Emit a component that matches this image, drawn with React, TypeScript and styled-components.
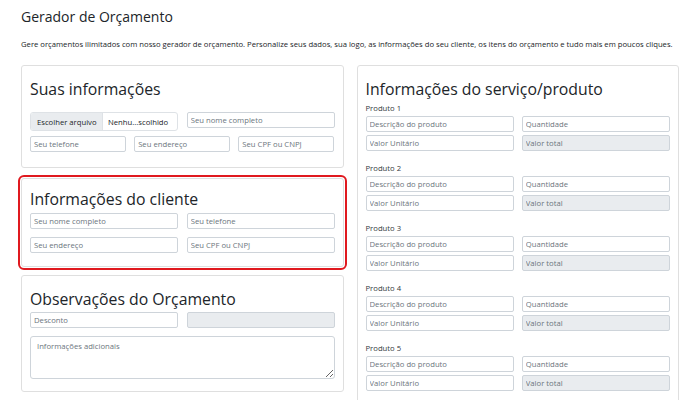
import styled, { createGlobalStyle } from "styled-components";

const GlobalStyle = createGlobalStyle`
  * {
    box-sizing: border-box;
  }
  body {
    margin: 0;
    background: #fff;
    color: #212529;
    font-family: "Open Sans", "Noto Sans", sans-serif;
  }
`;

const Page = styled.div`
  padding: 5px 21px 0;
`;

const Title = styled.h1`
  margin: 0;
  font-size: 14px;
  line-height: 24px;
  font-weight: 500;
`;

const Lead = styled.p`
  margin: 9px 0 15px;
  font-size: 7.68px;
  line-height: 12px;
  white-space: nowrap;
`;

const Columns = styled.div`
  display: grid;
  grid-template-columns: 1fr 1fr;
  gap: 13px;
  align-items: start;
`;

const LeftCol = styled.div`
  display: flex;
  flex-direction: column;
  gap: 8px;
`;

const Card = styled.section<{ $top: number; $bottom: number; $highlight?: boolean }>`
  border: 1px solid #dfdfdf;
  border-radius: 3px;
  padding: ${p => p.$top}px 8px ${p => p.$bottom}px;
  ${p => p.$highlight && `
    margin-top: 2px;
    outline: 2px solid #e0191f;
    outline-offset: 1px;
  `}
`;

const Heading = styled.h2<{ $gap: number }>`
  margin: 0 0 ${p => p.$gap}px;
  font-size: 15.8px;
  line-height: 20px;
  font-weight: 500;
`;

const Row = styled.div<{ $cols: number; $colGap?: number; $rowGap?: number }>`
  display: grid;
  grid-template-columns: repeat(${p => p.$cols}, 1fr);
  column-gap: ${p => p.$colGap ?? 9}px;
  align-items: start;
  margin-bottom: ${p => p.$rowGap ?? 8}px;
  &:last-child {
    margin-bottom: 0;
  }
`;

const Input = styled.input`
  display: block;
  width: 100%;
  height: 16px;
  margin: 0;
  padding: 0 3px;
  border: 1px solid #ced4da;
  border-radius: 2px;
  background: #fff;
  color: #212529;
  font-family: inherit;
  font-size: 7.7px;
  &::placeholder {
    color: #6c757d;
  }
  &:disabled {
    background: #e9ecef;
  }
`;

const TextArea = styled.textarea`
  display: block;
  width: 100%;
  height: 43px;
  margin: 0;
  padding: 4px 6px;
  border: 1px solid #ced4da;
  border-radius: 3px;
  font-family: inherit;
  font-size: 7.7px;
  &::placeholder {
    color: #6c757d;
  }
`;

const FilePicker = styled.label`
  display: flex;
  height: 19px;
  border: 1px solid #dee2e6;
  border-radius: 3px;
  overflow: hidden;
  font-size: 7.7px;
  cursor: pointer;
  input {
    display: none;
  }
`;

const FileButton = styled.span`
  display: flex;
  align-items: center;
  padding: 0 6px;
  width: 72px;
  background: #e9ecef;
  border-right: 1px solid #dee2e6;
  white-space: nowrap;
`;

const FileName = styled.span`
  display: flex;
  align-items: center;
  padding: 0 5px;
  white-space: nowrap;
`;

const ProductList = styled.div`
  display: flex;
  flex-direction: column;
  gap: 11px;
`;

const ProductLabel = styled.div`
  font-size: 7.7px;
  line-height: 12px;
  margin-bottom: 2px;
  color: #343a40;
`;

const products = [1, 2, 3, 4, 5];

export default function App() {
  return (
    <Page>
      <GlobalStyle />
      <Title>Gerador de Orçamento</Title>
      <Lead>
        Gere orçamentos ilimitados com nosso gerador de orçamento. Personalize seus dados, sua logo, as
        informações do seu cliente, os itens do orçamento e tudo mais em poucos cliques.
      </Lead>
      <Columns>
        <LeftCol>
          <Card $top={13} $bottom={15}>
            <Heading $gap={13}>Suas informações</Heading>
            <Row $cols={2} $rowGap={5}>
              <FilePicker>
                <input type="file" />
                <FileButton>Escolher arquivo</FileButton>
                <FileName>Nenhu...scolhido</FileName>
              </FilePicker>
              <Input placeholder="Seu nome completo" />
            </Row>
            <Row $cols={3} $colGap={8}>
              <Input placeholder="Seu telefone" />
              <Input placeholder="Seu endereço" />
              <Input placeholder="Seu CPF ou CNPJ" />
            </Row>
          </Card>

          <Card $top={10} $bottom={13} $highlight>
            <Heading $gap={4}>Informações do cliente</Heading>
            <Row $cols={2}>
              <Input placeholder="Seu nome completo" />
              <Input placeholder="Seu telefone" />
            </Row>
            <Row $cols={2}>
              <Input placeholder="Seu endereço" />
              <Input placeholder="Seu CPF ou CNPJ" />
            </Row>
          </Card>

          <Card $top={13} $bottom={12}>
            <Heading $gap={3}>Observações do Orçamento</Heading>
            <Row $cols={2}>
              <Input placeholder="Desconto" />
              <Input disabled />
            </Row>
            <TextArea placeholder="Informações adicionais" />
          </Card>
        </LeftCol>

        <Card $top={13} $bottom={11}>
          <Heading $gap={3}>Informações do serviço/produto</Heading>
          <ProductList>
            {products.map(n => (
              <div key={n}>
                <ProductLabel>Produto {n}</ProductLabel>
                <Row $cols={2} $colGap={8} $rowGap={3}>
                  <Input placeholder="Descrição do produto" />
                  <Input placeholder="Quantidade" />
                </Row>
                <Row $cols={2} $colGap={8} $rowGap={3}>
                  <Input placeholder="Valor Unitário" />
                  <Input placeholder="Valor total" disabled />
                </Row>
              </div>
            ))}
          </ProductList>
        </Card>
      </Columns>
    </Page>
  );
}
